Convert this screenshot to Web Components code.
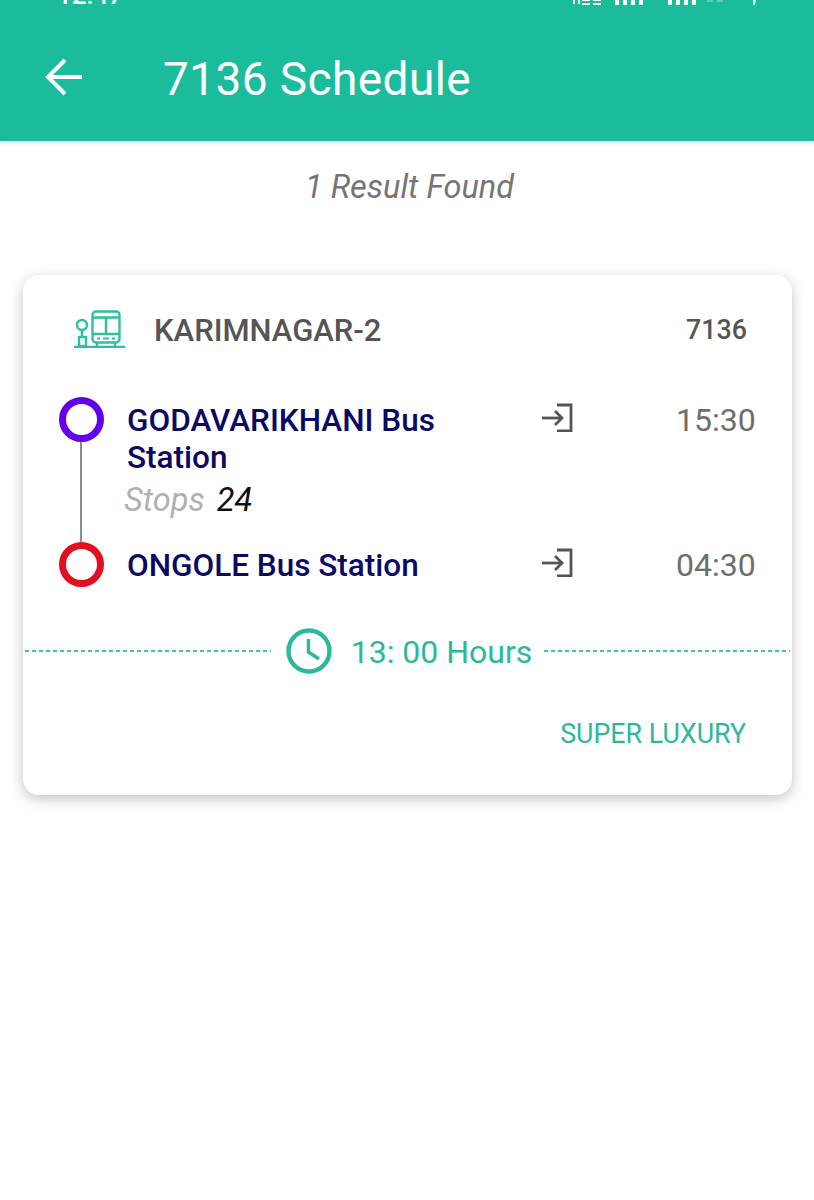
<!DOCTYPE html>
<html>
<head>
<meta charset="utf-8">
<title>7136 Schedule</title>
<style>
    html, body { margin: 0; padding: 0; background: #fff; }
    body { font-family: Roboto, "Liberation Sans", sans-serif; height: 1200px; overflow: hidden; }
</style>
</head>
<body>
<app-bar heading="7136 Schedule"></app-bar>
<result-count>1 Result Found</result-count>
<bus-card service="KARIMNAGAR-2" number="7136" duration="13: 00 Hours" kind="SUPER LUXURY">
    <bus-stop slot="stops" color="#6200ea" time="15:30" stops="24" linked>GODAVARIKHANI Bus Station</bus-stop>
    <bus-stop slot="stops" color="#e01020" time="04:30">ONGOLE Bus Station</bus-stop>
</bus-card>

<script>
const barTemplate = document.createElement("template");
barTemplate.innerHTML = `
<style>
    :host {
        display: block;
        height: 141px;
        background: #1bbc9b;
        color: #fff;
        box-shadow: 0 1px 6px rgba(0,0,0,.14);
        position: relative;
    }
    .status {
        height: 5px;
        overflow: hidden;
        display: flex;
        justify-content: space-between;
        padding: 0 54px 0 57px;
    }
    .clock {
        font-size: 26px;
        line-height: 24px;
        margin-top: -17px;
        font-weight: 500;
    }
    .status svg { display: block; }
    .main {
        display: flex;
        align-items: center;
        box-sizing: border-box;
        height: 136px;
        padding: 12px 0 0 44px;
    }
    .back { width: 40px; height: 38px; margin: -4px 79px 0 0; flex: none; }
    h1 {
        margin: 0;
        font-size: 46px;
        font-weight: 400;
        letter-spacing: .4px;
    }
</style>
<div class="status">
    <span class="clock">12:47</span>
    <svg width="187" height="5" viewBox="0 0 187 5" fill="#fff">
        <path d="M0 0h2v4H0zM5 0h2v4H5zM9 0h8v1H9zM9 3h8v2H9zM20 0h8v1h-8zM20 3h8v2h-8zM42 0h4v5h-4zM50 0h4v5h-4zM58 0h4v5h-4zM66 0h4v5h-4zM95 0h4v5h-4zM103 0h4v5h-4zM111 0h4v5h-4zM119 0h4v5h-4z"/>
        <path d="M134 0h6v2h-6zM144 0h6v2h-6z" opacity=".3"/>
        <path d="M180 0h3l-1 5h-2z" opacity=".8"/>
    </svg>
</div>
<div class="main">
    <svg class="back" viewBox="0 0 40 38" fill="none" stroke="#fff" stroke-width="4">
        <path d="M38 19H5"/>
        <path d="M21 2 4 19l17 17"/>
    </svg>
    <h1></h1>
</div>`;

class AppBar extends HTMLElement {
    constructor() {
        super();
        this.attachShadow({ mode: "open" });
        this.shadowRoot.appendChild(barTemplate.content.cloneNode(true));
        this.shadowRoot.querySelector("h1").innerText = this.getAttribute("heading");
    }
}

const countTemplate = document.createElement("template");
countTemplate.innerHTML = `
<style>
    :host {
        display: block;
        text-align: center;
        font-size: 32.5px;
        font-style: italic;
        color: #757575;
        line-height: 38px;
        padding: 27px 0 0 5px;
    }
</style>
<slot></slot>`;

class ResultCount extends HTMLElement {
    constructor() {
        super();
        this.attachShadow({ mode: "open" });
        this.shadowRoot.appendChild(countTemplate.content.cloneNode(true));
    }
}

const stopTemplate = document.createElement("template");
stopTemplate.innerHTML = `
<style>
    :host {
        display: grid;
        grid-template-columns: 45px 439px 136px 1fr;
    }
    .rail {
        display: flex;
        flex-direction: column;
        align-items: center;
    }
    .dot {
        width: 45px;
        height: 45px;
        box-sizing: border-box;
        border-radius: 50%;
        border: 7px solid;
        flex: none;
    }
    .line {
        flex: 1;
        width: 2px;
        margin-right: 2px;
        background: #8c8c8c;
        display: none;
    }
    :host([linked]) .line { display: block; }
    .info { padding: 5px 76px 0 23px; }
    .name {
        font-size: 31.5px;
        font-weight: 500;
        line-height: 37px;
        color: #0a0a64;
    }
    .count {
        display: none;
        font-size: 32.5px;
        font-style: italic;
        line-height: 38px;
        margin: 5px 0 23px -3px;
        color: #b0b0b0;
    }
    :host([stops]) .count { display: block; }
    .count b { font-weight: 400; color: #111; margin-left: 4px; }
    svg { display: block; width: 33px; height: 29px; margin-top: 6px; margin-left: -3px; }
    .time {
        font-size: 32px;
        font-weight: 400;
        line-height: 38px;
        color: #6e6e6e;
        padding-top: 4px;
        margin-left: -3px;
        white-space: nowrap;
    }
</style>
<div class="rail"><span class="dot"></span><span class="line"></span></div>
<div class="info">
    <div class="name"><slot></slot></div>
    <div class="count">Stops <b></b></div>
</div>
<svg viewBox="0 0 33 29" fill="none" stroke="#555" stroke-width="2.8">
    <path d="M17 2h14v26H17"/>
    <path d="M2 15h20"/>
    <path d="M15 8l7 7-7 7"/>
</svg>
<div class="time"></div>`;

class BusStop extends HTMLElement {
    constructor() {
        super();
        this.attachShadow({ mode: "open" });
        this.shadowRoot.appendChild(stopTemplate.content.cloneNode(true));
        this.shadowRoot.querySelector(".dot").style.borderColor = this.getAttribute("color");
        this.shadowRoot.querySelector(".time").innerText = this.getAttribute("time");
        this.shadowRoot.querySelector("b").innerText = this.getAttribute("stops");
    }
}

const cardTemplate = document.createElement("template");
cardTemplate.innerHTML = `
<style>
    :host {
        display: block;
        margin: 69px 22px 0 23px;
        height: 520px;
        background: #fff;
        border-radius: 16px;
        box-shadow: 0 4px 14px rgba(0,0,0,.24);
        color: #555;
    }
    header {
        display: flex;
        align-items: center;
        height: 38px;
        padding: 35px 45px 0 51px;
    }
    header svg { width: 51px; height: 38px; flex: none; margin-right: 29px; }
    .service { font-size: 31px; font-weight: 500; flex: 1; position: relative; top: 1px; }
    .number { font-size: 26.8px; font-weight: 500; position: relative; top: 1px; }
    .stops { padding: 49px 36px 0; }
    .divider {
        display: flex;
        align-items: center;
        margin-top: 41px;
        padding: 0 2px;
        color: #2bb89b;
    }
    .divider i {
        flex: 1;
        height: 2px;
        background: repeating-linear-gradient(90deg, #45c3aa 0 4px, transparent 4px 7px);
    }
    .divider svg { width: 46px; height: 46px; margin-left: 15px; margin-right: 19px; flex: none; }
    .divider span { font-size: 32px; margin-right: 12px; white-space: nowrap; padding-top: 2px; }
    .kind {
        text-align: right;
        font-size: 26.8px;
        color: #2bb89b;
        padding: 44px 46px 0 0;
        line-height: 32px;
    }
</style>
<header>
    <svg viewBox="0 0 51 38" fill="none" stroke="#2fbf9f" stroke-width="2.4">
        <rect x="18.500" y="1.500" width="27" height="31" rx="3.500"/>
        <path d="M18.500 7.500h27M18.500 24h27M32 7.500v16.500"/>
        <path d="M23 28.500h3M29 28.500h6M38 28.500h3" stroke-width="2"/>
        <path d="M23 33v3M41 33v3"/>
        <circle cx="8" cy="15" r="5"/>
        <path d="M8 20v7"/>
        <rect x="5" y="27" width="7" height="9"/>
        <path d="M0 37h51" stroke-width="2.400"/>
    </svg>
    <span class="service"></span>
    <span class="number"></span>
</header>
<div class="stops"><slot name="stops"></slot></div>
<div class="divider">
    <i></i>
    <svg viewBox="0 0 46 46" fill="none" stroke="#2bb89b" stroke-width="4.400">
        <circle cx="23" cy="23" r="20.500"/>
        <path d="M22.500 11v13l10.500 7" stroke-width="3.400"/>
    </svg>
    <span class="duration"></span>
    <i></i>
</div>
<div class="kind"></div>`;

class BusCard extends HTMLElement {
    constructor() {
        super();
        this.attachShadow({ mode: "open" });
        this.shadowRoot.appendChild(cardTemplate.content.cloneNode(true));
        this.shadowRoot.querySelector(".service").innerText = this.getAttribute("service");
        this.shadowRoot.querySelector(".number").innerText = this.getAttribute("number");
        this.shadowRoot.querySelector(".duration").innerText = this.getAttribute("duration");
        this.shadowRoot.querySelector(".kind").innerText = this.getAttribute("kind");
    }
}

window.customElements.define("app-bar", AppBar);
window.customElements.define("result-count", ResultCount);
window.customElements.define("bus-stop", BusStop);
window.customElements.define("bus-card", BusCard);
</script>
</body>
</html>
